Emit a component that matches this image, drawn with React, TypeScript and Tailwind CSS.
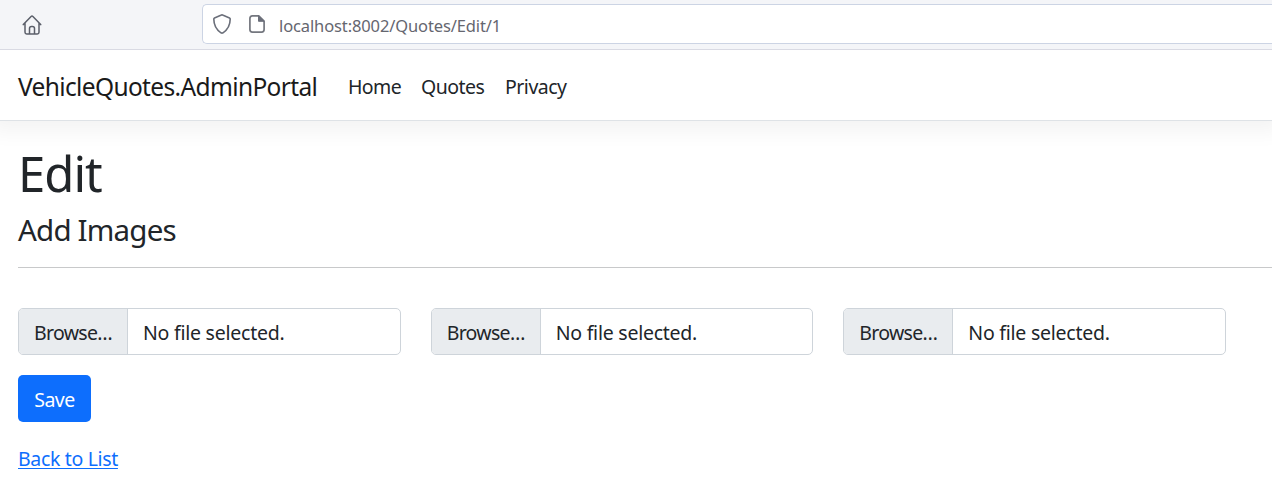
function HomeIcon() {
  return (
    <svg className="block h-5 w-5" viewBox="0 0 20 20" fill="none" stroke="#5b5f6a" strokeWidth="1.5" strokeLinecap="round" strokeLinejoin="round">
      <path d="M1.300 9.600 9.100 1.500q.9-.9 1.800 0l7.800 8.100M3 8.200v9q0 1.700 1.700 1.700h10.600q1.700 0 1.700-1.700v-9M7.500 18.500v-5q0-2 2-2h1q2 0 2 2v5" />
    </svg>
  );
}

function ShieldIcon() {
  return (
    <svg className="block h-5 w-5" viewBox="0 0 20 20" fill="none" stroke="#6b6f7a" strokeWidth="1.600" strokeLinejoin="round">
      <path d="M9.400 1Q10 .7 10.600 1l6.900 2.900q.7.3.7 1.100c0 6-2.300 10.500-7.200 13.800q-1 .6-2 0C4.100 15.500 1.800 11 1.800 5q0-.8.7-1.100z" />
    </svg>
  );
}

function PageIcon() {
  return (
    <svg className="block h-[18px] w-4" viewBox="0 0 16 18" fill="none" stroke="#74777f" strokeWidth="1.700" strokeLinejoin="round">
      <path d="M9.800.9H3.400Q.9.900.9 3.400v11.200q0 2.500 2.500 2.500h9.200q2.500 0 2.500-2.500V6z" />
      <path d="M9.500.8V6.300h5.600z" fill="#6b6f7a" stroke="#6b6f7a" strokeWidth="1" />
    </svg>
  );
}

function FileInput() {
  return (
    <div className="flex h-[47px] min-w-0 flex-1 overflow-hidden rounded-[5px] border border-[#ced4da] bg-white text-[19.5px] leading-[47px] whitespace-nowrap">
      <span className="w-[109px] shrink-0 border-r border-[#ced4da] bg-[#e9ecef] pl-[15px] tracking-[-0.7px]">Browse…</span>
      <span className="pl-[15px] tracking-[-0.24px]">No file selected.</span>
    </div>
  );
}

export default function App() {
  return (
    <div className="h-[486px] w-full overflow-hidden bg-white font-['Noto_Sans','Open_Sans',sans-serif] text-[#212529]">
      <header className="relative z-10 flex h-[50px] border-b border-[#d9dae3] bg-[#f4f5f8] pt-1">
        <div className="w-[202px] pt-[11px] pl-[22px]">
          <HomeIcon />
        </div>
        <div className="flex h-10 flex-1 rounded-l-[5px] border border-r-0 border-[#ccd4e4] bg-white pl-[9px]">
          <div className="pt-[9px]"><ShieldIcon /></div>
          <div className="pt-[10px] pl-[17px]"><PageIcon /></div>
          <span className="pl-[14px] text-[16.5px] leading-[41px] tracking-[-0.12px] whitespace-nowrap text-[#65666f]">localhost:8002/Quotes/Edit/1</span>
        </div>
      </header>

      <nav className="flex h-[71px] items-start border-b border-[#dee2e6] bg-white pl-[18px] leading-[73px] whitespace-nowrap shadow-[0_0_20px_10px_rgba(0,0,0,0.05)]">
        <a className="w-[330px] text-[24.500px] tracking-[-0.640px] text-[#1a1a1a]">VehicleQuotes.AdminPortal</a>
        <a className="w-[73px] text-[19.5px] tracking-[-0.6px]">Home</a>
        <a className="w-[84px] text-[19.5px] tracking-[-0.5px]">Quotes</a>
        <a className="text-[19.5px] tracking-[-0.5px]">Privacy</a>
      </nav>

      <main className="pt-[22px] pl-[18px]">
        <h1 className="h-[60px] text-[49px] leading-[60px] tracking-[-1px]">Edit</h1>
        <h4 className="mt-[9px] h-9 text-[29.500px] leading-9 tracking-[-0.8px]">Add Images</h4>
        <hr className="mt-[19px] border-t border-[#c8c9ca]" />
        <form>
          <div className="mt-10 flex w-[1208px] gap-[30px]">
            <FileInput />
            <FileInput />
            <FileInput />
          </div>
          <button type="button" className="mt-5 block h-[47px] w-[73px] rounded-[5px] bg-[#0d6efd] text-[19.5px] leading-[49px] tracking-[-0.5px] text-white">Save</button>
        </form>
        <a className="mt-[22px] block h-[30px] w-fit text-[19.5px] leading-[30px] tracking-[-0.34px] text-[#0d6efd] underline decoration-1 underline-offset-2">Back to List</a>
      </main>
    </div>
  );
}
